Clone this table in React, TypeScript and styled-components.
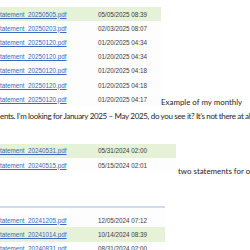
import styled, { createGlobalStyle } from "styled-components";

const Global = createGlobalStyle`
  html, body {
    margin: 0;
    padding: 0;
    background: #ffffff;
    overflow: hidden;
  }
`;

const Page = styled.div`
  width: 250px;
  height: 250px;
  overflow: hidden;
  display: flex;
  flex-direction: column;
  font-family: Lato, "Open Sans", sans-serif;
  color: #242424;

  & > * {
    flex-shrink: 0;
  }
`;

const Block = styled.div<{ $top: number }>`
  display: flex;
  align-items: flex-end;
  margin-top: ${(p) => p.$top}px;
  white-space: nowrap;
`;

const Shot = styled.div<{ $w: number }>`
  width: ${(p) => p.$w}px;
  flex-shrink: 0;
  display: flex;
  flex-direction: column;
  background: #fdfdfd;
`;

const HeaderEdge = styled.div`
  height: 5px;
  border-top: 2px solid #cfdcee;
  background: linear-gradient(90deg, #ffffff 0 70px, #fdfdfd 70px);
`;

const Row = styled.div<{ $sel?: boolean }>`
  height: 14.2px;
  flex-shrink: 0;
  display: grid;
  grid-template-columns: 98px 1fr;
  align-items: center;
  font-family: "Liberation Sans", Arial, sans-serif;
  font-size: 6.3px;
  background: ${(p) => (p.$sel ? "#e6f2d8" : "transparent")};
`;

const FileLink = styled.span`
  color: #3b68c0;
  text-decoration: underline;
  text-underline-offset: 1px;
`;

const Stamp = styled.span`
  color: #3c3c3c;
`;

const Caption = styled.span<{ $pad: number; $drop: number }>`
  font-size: 7.9px;
  line-height: 10px;
  padding-left: ${(p) => p.$pad}px;
  margin-bottom: ${(p) => -p.$drop}px;
`;

const Line = styled.div`
  margin-top: 3.5px;
  font-size: 8px;
  letter-spacing: -0.34px;
  line-height: 12px;
  white-space: nowrap;
  overflow: hidden;
`;

type File = { name: string; date: string; sel?: boolean };

const first: File[] = [
  { name: "tatement_20250505.pdf", date: "05/05/2025 08:39", sel: true },
  { name: "tatement_20250203.pdf", date: "02/03/2025 08:07" },
  { name: "tatement_20250120.pdf", date: "01/20/2025 04:34" },
  { name: "tatement_20250120.pdf", date: "01/20/2025 04:34" },
  { name: "tatement_20250120.pdf", date: "01/20/2025 04:18" },
  { name: "tatement_20250120.pdf", date: "01/20/2025 04:18" },
  { name: "tatement_20250120.pdf", date: "01/20/2025 04:17" },
];

const second: File[] = [
  { name: "tatement_20240531.pdf", date: "05/31/2024 02:00", sel: true },
  { name: "tatement_20240515.pdf", date: "05/15/2024 02:01" },
];

const third: File[] = [
  { name: "tatement_20241205.pdf", date: "12/05/2024 07:12" },
  { name: "tatement_20241014.pdf", date: "10/14/2024 08:39", sel: true },
  { name: "tatement_20240831.pdf", date: "08/31/2024 02:00" },
];

function Rows({ files }: { files: File[] }) {
  return (
    <>
      {files.map((f, i) => (
        <Row key={i} $sel={f.sel}>
          <FileLink>{f.name}</FileLink>
          <Stamp>{f.date}</Stamp>
        </Row>
      ))}
    </>
  );
}

export default function App() {
  return (
    <Page>
      <Global />
      <Block $top={7}>
        <Shot $w={161}>
          <Rows files={first} />
        </Shot>
        <Caption $pad={0} $drop={1}>
          Example of my monthly
        </Caption>
      </Block>
      <Line>ents. I’m looking for January 2025 – May 2025, do you see it? It’s not there at all.</Line>
      <Block $top={22}>
        <Shot $w={176}>
          <Rows files={second} />
        </Shot>
        <Caption $pad={2} $drop={4}>
          two statements for one month
        </Caption>
      </Block>
      <Block $top={34}>
        <Shot $w={165}>
          <HeaderEdge />
          <Rows files={third} />
        </Shot>
      </Block>
    </Page>
  );
}
